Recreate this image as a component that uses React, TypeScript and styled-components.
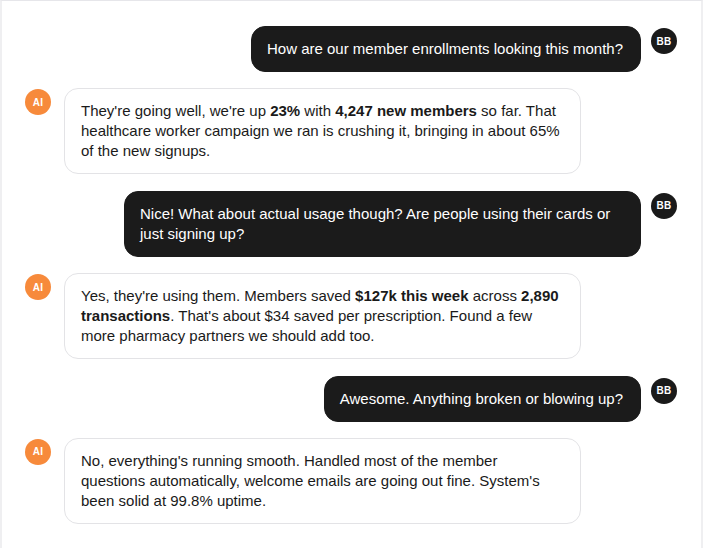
import React from "react";
import styled, { createGlobalStyle } from "styled-components";

const Global = createGlobalStyle`
  html, body { margin: 0; padding: 0; background: #ffffff; }
  body { font-family: "Liberation Sans", Arial, Helvetica, sans-serif; -webkit-font-smoothing: antialiased; }
  * { box-sizing: border-box; }
`;

const Panel = styled.div`
  width: 703px;
  height: 548px;
  overflow: hidden;
  background: #ffffff;
  border-top: 1px solid #e6e6ea;
  border-left: 2px solid #efeff1;
  border-right: 2px solid #efeff1;
  padding: 25px 24px 0 23px;
  display: flex;
  flex-direction: column;
  gap: 16.4px;
`;

const Row = styled.div<{ $user?: boolean }>`
  display: flex;
  flex-direction: ${(p) => (p.$user ? "row-reverse" : "row")};
  align-items: flex-start;
  gap: ${(p) => (p.$user ? "10px" : "13px")};
`;

const Avatar = styled.div<{ $user?: boolean }>`
  flex: 0 0 26px;
  width: 26px;
  height: 26px;
  margin-top: ${(p) => (p.$user ? "2px" : "1px")};
  border-radius: 50%;
  background: ${(p) => (p.$user ? "#1a1a1a" : "#f78a3b")};
  color: #ffffff;
  font-size: 10px;
  font-weight: 700;
  display: flex;
  align-items: center;
  justify-content: center;
  letter-spacing: 0.2px;
`;

const Bubble = styled.div<{ $user?: boolean }>`
  max-width: 517px;
  padding: 12px ${(p) => (p.$user ? "17px 12px 15px" : "16px")};
  border-radius: 14px;
  font-size: 15px;
  line-height: 20px;
  background: ${(p) => (p.$user ? "#1b1b1b" : "#ffffff")};
  color: ${(p) => (p.$user ? "#ffffff" : "#1a1a1a")};
  border: 1px solid ${(p) => (p.$user ? "#1b1b1b" : "#e3e3e6")};
  b { font-weight: 700; }
`;

type Msg = { user: boolean; content: React.ReactNode };

const messages: Msg[] = [
  { user: true, content: "How are our member enrollments looking this month?" },
  {
    user: false,
    content: (
      <>
        They're going well, we're up <b>23%</b> with <b>4,247 new members</b> so far. That
        healthcare worker campaign we ran is crushing it, bringing in about 65% of the new signups.
      </>
    ),
  },
  {
    user: true,
    content: "Nice! What about actual usage though? Are people using their cards or just signing up?",
  },
  {
    user: false,
    content: (
      <>
        Yes, they're using them. Members saved <b>$127k this week</b> across <b>2,890 transactions</b>.
        That's about $34 saved per prescription. Found a few more pharmacy partners we should add too.
      </>
    ),
  },
  { user: true, content: "Awesome. Anything broken or blowing up?" },
  {
    user: false,
    content:
      "No, everything's running smooth. Handled most of the member questions automatically, welcome emails are going out fine. System's been solid at 99.8% uptime.",
  },
];

export default function App() {
  return (
    <>
      <Global />
      <Panel>
        {messages.map((m, i) => (
          <Row key={i} $user={m.user}>
            <Avatar $user={m.user}>{m.user ? "BB" : "AI"}</Avatar>
            <Bubble $user={m.user}>{m.content}</Bubble>
          </Row>
        ))}
      </Panel>
    </>
  );
}
